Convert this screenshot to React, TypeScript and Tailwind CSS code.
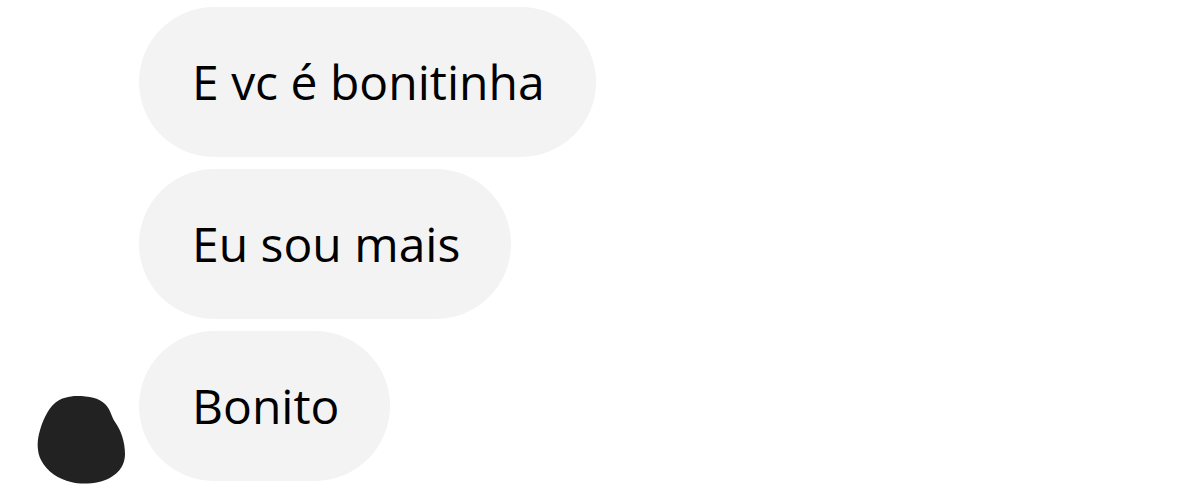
const messages = ["E vc é bonitinha", "Eu sou mais", "Bonito"];

function Avatar() {
  return (
    <svg width="88" height="88" viewBox="0 0 88 88" className="block">
      <path
        d="M40 0 C52 0 62 2 68 8 C74 14 74 20 78 26 C84 34 88 46 88 58 C88 72 78 82 62 86 C52 88 42 88 34 86 C22 83 10 76 4 64 C0 56 0 46 2 38 C5 26 10 14 18 7 C24 2 32 0 40 0 Z"
        fill="#222222"
      />
    </svg>
  );
}

export default function App() {
  return (
    <div className="w-[1199px] h-[503px] bg-white overflow-hidden pt-[7px] pl-[37px] flex flex-col gap-[12px] font-['Open_Sans',sans-serif]">
      {messages.map((text, index) => {
        const isLast = index === messages.length - 1;
        return (
          <div key={index} className="flex items-end">
            <div className="w-[88px] mr-[14px] shrink-0 translate-y-[3px]">
              {isLast && <Avatar />}
            </div>
            <div className="h-[150px] rounded-full bg-[#f3f3f3] pl-[53px] pr-[51px] flex items-center text-[48px] text-black leading-none">
              {text}
            </div>
          </div>
        );
      })}
    </div>
  );
}
